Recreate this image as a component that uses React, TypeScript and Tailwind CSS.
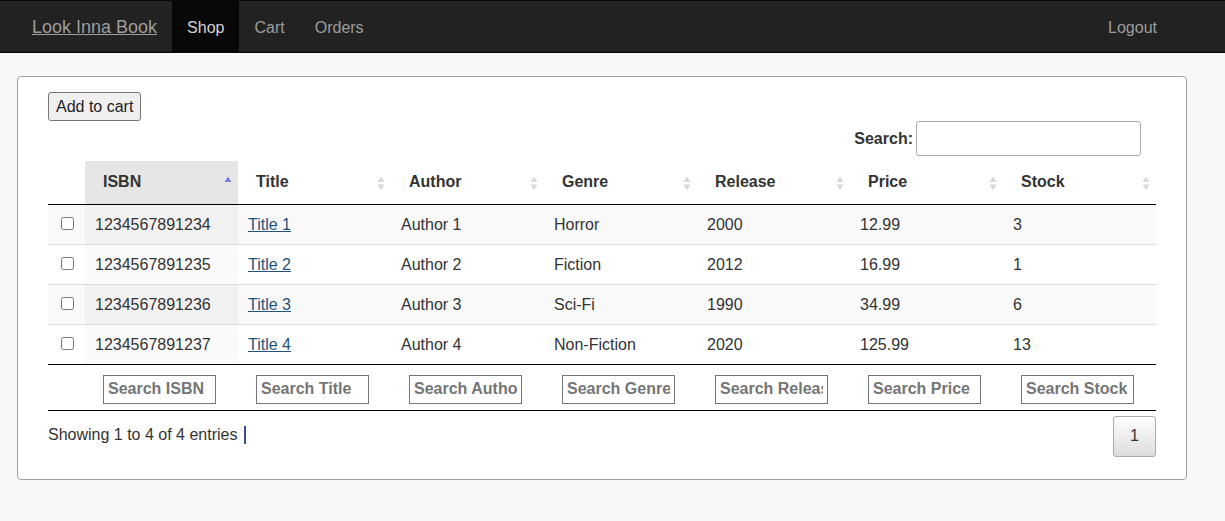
const books = [
  { isbn: '1234567891234', title: 'Title 1', author: 'Author 1', genre: 'Horror', release: '2000', price: '12.99', stock: '3' },
  { isbn: '1234567891235', title: 'Title 2', author: 'Author 2', genre: 'Fiction', release: '2012', price: '16.99', stock: '1' },
  { isbn: '1234567891236', title: 'Title 3', author: 'Author 3', genre: 'Sci-Fi', release: '1990', price: '34.99', stock: '6' },
  { isbn: '1234567891237', title: 'Title 4', author: 'Author 4', genre: 'Non-Fiction', release: '2020', price: '125.99', stock: '13' },
]

const columns = ['ISBN', 'Title', 'Author', 'Genre', 'Release', 'Price', 'Stock']

function SortIcon({ active }: { active?: boolean }) {
  return (
    <svg width="8" height="15" viewBox="0 0 8 15" className="absolute right-[6px] top-[15px]">
      <polygon points="0.5,6 4,0.5 7.5,6" fill={active ? '#7c80d8' : '#d8d8d8'} />
      {!active && <polygon points="0.5,8.5 4,14 7.5,8.5" fill="#d8d8d8" />}
    </svg>
  )
}

export default function App() {
  return (
    <div className="min-h-[521px] bg-[#f8f8f8] font-['Liberation_Sans',Arial,sans-serif] text-[16px] text-[#333]">
      <nav className="flex h-[53px] items-stretch justify-between border-y border-[#080808] bg-[#222]">
        <div className="flex items-stretch pl-[17px]">
          <a className="flex items-center px-[15px] pt-[2px] text-[18px] text-[#9d9d9d] underline">Look Inna Book</a>
          <a className="flex items-center bg-[#080808] px-[15px] pt-[2px] text-[#d4d4d4]">Shop</a>
          <a className="flex items-center px-[15px] pt-[2px] text-[#9d9d9d]">Cart</a>
          <a className="flex items-center px-[15px] pt-[2px] text-[#9d9d9d]">Orders</a>
        </div>
        <div className="flex items-stretch pr-[53px]">
          <a className="flex items-center px-[15px] pt-[2px] text-[#9d9d9d]">Logout</a>
        </div>
      </nav>

      <div className="ml-[17px] mt-[23px] w-[1170px] rounded-[4px] border border-[#a0a0a0] bg-white px-[30px] pb-[22px] pt-[15px]">
        <button className="h-[29px] rounded-[3px] border border-[#767676] bg-[#efefef] px-[7px] text-[16px] text-[#222]">
          Add to cart
        </button>

        <div className="flex items-center justify-end pr-[15px]">
          <label className="mr-[3px] font-bold">Search:</label>
          <input className="h-[35px] w-[225px] rounded-[3px] border border-[#aaa] bg-white outline-none" />
        </div>

        <table className="mt-[5px] w-[1108px] table-fixed border-collapse">
          <colgroup>
            <col className="w-[37px]" />
            {columns.map((c) => (
              <col key={c} className="w-[153px]" />
            ))}
          </colgroup>
          <thead>
            <tr className="border-b border-black">
              <th className="h-[43px]"></th>
              {columns.map((c, i) => (
                <th
                  key={c}
                  className={`relative h-[43px] px-[18px] text-left font-bold ${i === 0 ? 'bg-[#e6e6e6]' : ''}`}
                >
                  {c}
                  <SortIcon active={i === 0} />
                </th>
              ))}
            </tr>
          </thead>
          <tbody>
            {books.map((b, r) => {
              const odd = r % 2 === 0
              return (
                <tr key={b.isbn} className={`h-[40px] ${r > 0 ? 'border-t border-[#ddd]' : ''} ${odd ? 'bg-[#f9f9f9]' : 'bg-white'}`}>
                  <td className="text-center">
                    <input type="checkbox" className="ml-[2px] mt-[5px] h-[13px] w-[13px]" />
                  </td>
                  <td className={`px-[10px] pt-[2px] ${odd ? 'bg-[#f1f1f1]' : 'bg-[#fafafa]'}`}>{b.isbn}</td>
                  <td className="px-[10px] pt-[2px]">
                    <a className="text-[#23527c] underline">{b.title}</a>
                  </td>
                  <td className="px-[10px] pt-[2px]">{b.author}</td>
                  <td className="px-[10px] pt-[2px]">{b.genre}</td>
                  <td className="px-[10px] pt-[2px]">{b.release}</td>
                  <td className="px-[10px] pt-[2px]">{b.price}</td>
                  <td className="px-[10px] pt-[2px]">{b.stock}</td>
                </tr>
              )
            })}
          </tbody>
          <tfoot>
            <tr className="border-y border-black">
              <td></td>
              {columns.map((c) => (
                <td key={c} className="px-[18px] pb-[6px] pt-[10px]">
                  <input
                    placeholder={`Search ${c}`}
                    className="block h-[29px] w-[113px] border border-[#767676] px-[4px] text-[16px] font-bold placeholder:text-[#757575] outline-none"
                  />
                </td>
              ))}
            </tr>
          </tfoot>
        </table>

        <div className="mt-[5px] flex items-start justify-between">
          <div className="mt-[7px] flex items-center">
            <span>Showing 1 to 4 of 4 entries</span>
            <span className="ml-[7px] h-[18px] w-[2px] bg-[#3b4f8c]"></span>
          </div>
          <button className="h-[41px] w-[43px] rounded-[3px] border border-[#aaa] bg-gradient-to-b from-white to-[#dcdcdc] text-[16px] text-[#333]">
            1
          </button>
        </div>
      </div>
    </div>
  )
}
